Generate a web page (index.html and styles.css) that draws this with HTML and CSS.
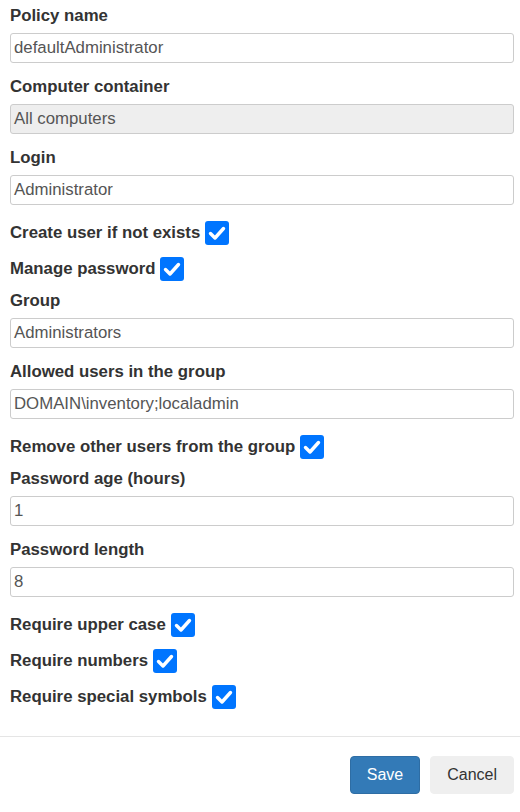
FILE: index.html
```html
<!DOCTYPE html>
<html>
<head>
<meta charset="utf-8">
<link rel="stylesheet" href="styles.css">
</head>
<body>
<div class="body">
  <div class="group">
    <label class="lbl">Policy name</label>
    <div class="input">defaultAdministrator</div>
  </div>
  <div class="group">
    <label class="lbl">Computer container</label>
    <div class="input disabled">All computers</div>
  </div>
  <div class="group">
    <label class="lbl">Login</label>
    <div class="input">Administrator</div>
  </div>
  <div class="check-row">
    <span class="lbl">Create user if not exists</span>
    <span class="box"><svg viewBox="0 0 24 24" width="24" height="24"><path d="M5.5 12.5 L10 17 L18.5 7.5" fill="none" stroke="#fff" stroke-width="3.4" stroke-linecap="round" stroke-linejoin="round"/></svg></span>
  </div>
  <div class="check-row">
    <span class="lbl">Manage password</span>
    <span class="box"><svg viewBox="0 0 24 24" width="24" height="24"><path d="M5.5 12.5 L10 17 L18.5 7.5" fill="none" stroke="#fff" stroke-width="3.4" stroke-linecap="round" stroke-linejoin="round"/></svg></span>
  </div>
  <div class="group">
    <label class="lbl">Group</label>
    <div class="input">Administrators</div>
  </div>
  <div class="group">
    <label class="lbl">Allowed users in the group</label>
    <div class="input">DOMAIN\inventory;localadmin</div>
  </div>
  <div class="check-row">
    <span class="lbl">Remove other users from the group</span>
    <span class="box"><svg viewBox="0 0 24 24" width="24" height="24"><path d="M5.5 12.5 L10 17 L18.5 7.5" fill="none" stroke="#fff" stroke-width="3.4" stroke-linecap="round" stroke-linejoin="round"/></svg></span>
  </div>
  <div class="group">
    <label class="lbl">Password age (hours)</label>
    <div class="input">1</div>
  </div>
  <div class="group">
    <label class="lbl">Password length</label>
    <div class="input">8</div>
  </div>
  <div class="check-row">
    <span class="lbl">Require upper case</span>
    <span class="box"><svg viewBox="0 0 24 24" width="24" height="24"><path d="M5.5 12.5 L10 17 L18.5 7.5" fill="none" stroke="#fff" stroke-width="3.4" stroke-linecap="round" stroke-linejoin="round"/></svg></span>
  </div>
  <div class="check-row">
    <span class="lbl">Require numbers</span>
    <span class="box"><svg viewBox="0 0 24 24" width="24" height="24"><path d="M5.5 12.5 L10 17 L18.5 7.5" fill="none" stroke="#fff" stroke-width="3.4" stroke-linecap="round" stroke-linejoin="round"/></svg></span>
  </div>
  <div class="check-row">
    <span class="lbl">Require special symbols</span>
    <span class="box"><svg viewBox="0 0 24 24" width="24" height="24"><path d="M5.5 12.5 L10 17 L18.5 7.5" fill="none" stroke="#fff" stroke-width="3.4" stroke-linecap="round" stroke-linejoin="round"/></svg></span>
  </div>
</div>
<div class="footer">
  <button class="btn btn-primary">Save</button>
  <button class="btn btn-default">Cancel</button>
</div>
</body>
</html>
```
FILE: styles.css
```css
* { box-sizing: border-box; }
html, body { margin: 0; padding: 0; background: #fff; }
body {
  font-family: "Liberation Sans", Arial, sans-serif;
  font-size: 16.8px;
  color: #333;
  width: 520px;
}
.body {
  padding: 5px 6px 18px 10px;
}
.group {
  display: flex;
  flex-direction: column;
  margin-bottom: 13px;
}
.lbl {
  display: block;
  font-weight: bold;
  line-height: 22px;
  color: #333;
}
.group .lbl { margin-bottom: 6px; }
.input {
  height: 30px;
  border: 1px solid #ccc;
  border-radius: 3px;
  padding: 0 3px;
  line-height: 28px;
  color: #555;
  background: #fff;
  white-space: nowrap;
}
.input.disabled { background: #eee; }
.check-row {
  display: flex;
  align-items: center;
  gap: 5px;
  padding: 3px 0 9px;
}
.check-row .lbl { line-height: 24px; }
.box {
  width: 24px;
  height: 24px;
  border-radius: 3px;
  background: #0075ff;
  display: flex;
  align-items: center;
  justify-content: center;
}
.box svg { display: block; }
.footer {
  border-top: 1px solid #e5e5e5;
  display: flex;
  justify-content: flex-end;
  gap: 10px;
  padding: 19px 6px 0 10px;
}
.btn {
  font-family: "Liberation Sans", Arial, sans-serif;
  font-size: 16px;
  height: 38px;
  padding: 0 16px;
  border-radius: 4px;
  border: 1px solid transparent;
  cursor: pointer;
}
.btn-primary {
  background: #337ab7;
  border-color: #2e6da4;
  color: #fff;
}
.btn-default {
  background: #efefef;
  border-color: #efefef;
  color: #333;
}
```
